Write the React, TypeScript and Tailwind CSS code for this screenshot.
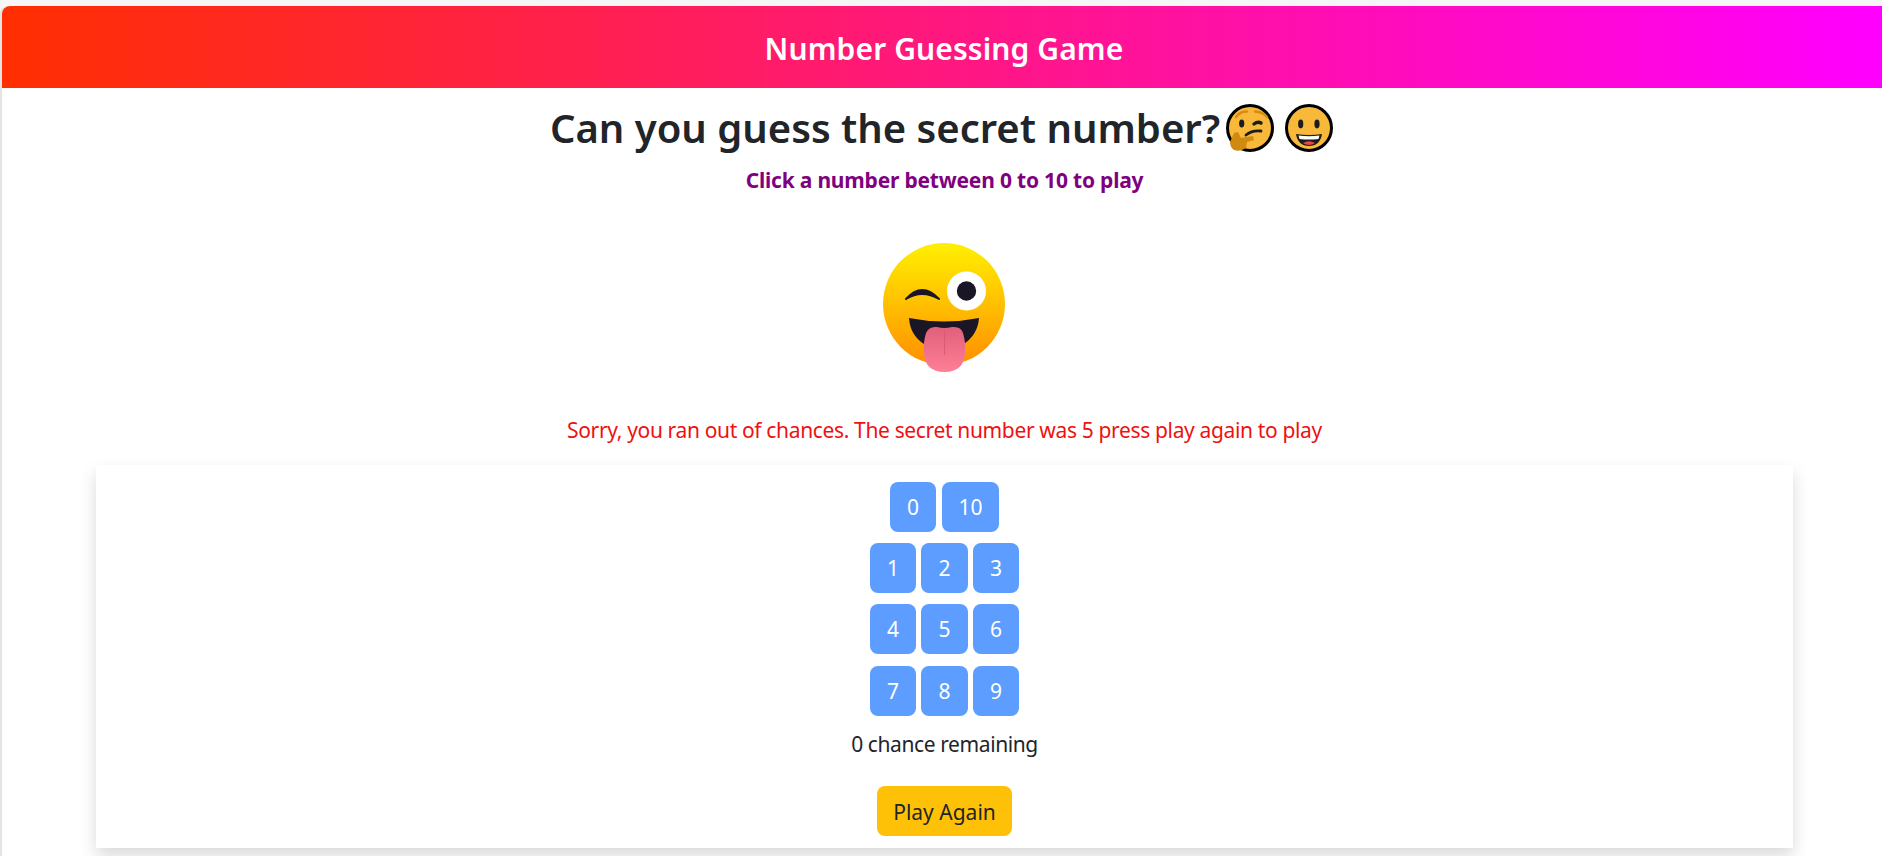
import React from "react";

const ThinkingFace = () => (
  <svg viewBox="0 0 48 48" className="w-12 h-12 shrink-0">
    <circle cx="24" cy="24" r="22.5" fill="#f8b93a" stroke="#000" strokeWidth="3" />
    <path d="M10 13 Q14 7.5 21 7.5" fill="none" stroke="#d98a12" strokeWidth="2.4" strokeLinecap="round" />
    <path d="M29 7.5 Q37 8 41 13" fill="none" stroke="#d98a12" strokeWidth="2.4" strokeLinecap="round" />
    <ellipse cx="15.7" cy="19.5" rx="2.6" ry="4" fill="#1c1c1c" />
    <path d="M28 20 Q32 17 35 19" fill="none" stroke="#1c1c1c" strokeWidth="3.4" strokeLinecap="round" />
    <path d="M20 31 Q26 26 35 27" fill="none" stroke="#1c1c1c" strokeWidth="2.8" strokeLinecap="round" />
    <path d="M8 29 L12 28 L15 34 L27 32 L28 36 L21 38 L20 44 Q14 48 8 46 Q4 43 4 38 Z" fill="#cf8a0f" />
  </svg>
);

const GrinningFace = () => (
  <svg viewBox="0 0 48 48" className="w-12 h-12 shrink-0">
    <circle cx="24" cy="24" r="22.5" fill="#f8b93a" stroke="#000" strokeWidth="3" />
    <ellipse cx="15.7" cy="20" rx="2.6" ry="4.4" fill="#1c1c1c" />
    <ellipse cx="32" cy="20" rx="2.6" ry="4.4" fill="#1c1c1c" />
    <path d="M11 30 Q24 32 37 30 Q35 42 24 42 Q13 42 11 30 Z" fill="#1c1c1c" />
    <path d="M13.5 31.5 Q24 33 34.5 31.5 L33.5 35 Q24 36 14.5 35 Z" fill="#fff" />
    <path d="M18 39 Q24 35.5 30 39 Q27 41 24 41 Q21 41 18 39 Z" fill="#e5484d" />
  </svg>
);

const WinkFace = () => (
  <svg viewBox="0 0 128 132" className="w-32 h-[132px]">
    <defs>
      <linearGradient id="face" x1="0" y1="0" x2="0" y2="1">
        <stop offset="0" stopColor="#fff000" />
        <stop offset="1" stopColor="#ff8f00" />
      </linearGradient>
      <linearGradient id="tongue" x1="0" y1="0" x2="0" y2="1">
        <stop offset="0" stopColor="#e0607c" />
        <stop offset="1" stopColor="#ff7f96" />
      </linearGradient>
    </defs>
    <circle cx="63" cy="61" r="61" fill="url(#face)" />
    <circle cx="85.5" cy="48" r="19.5" fill="#fff" />
    <circle cx="85.5" cy="48" r="9.7" fill="#1a1626" />
    <path d="M25 56 Q41 38 58 56 Q41 46 25 56 Z" fill="#1a1626" stroke="#1a1626" strokeWidth="2" strokeLinejoin="round" />
    <path d="M28 75 Q63 82 98 75 Q97 91 83 101 L43 101 Q29 92 28 75 Z" fill="#1a1626" />
    <path d="M45 90 Q48 83 56 84 Q63 86 71 84 Q80 83 82 90 Q85 100 84 110 Q83 129 63.5 129 Q44 129 43 110 Q42 100 45 90 Z" fill="url(#tongue)" />
    <path d="M63.5 87 L63.5 112" stroke="#d95a76" strokeWidth="1" />
  </svg>
);

const NumButton = ({ label, className }: { label: string; className: string }) => (
  <button className={`h-[50px] rounded-lg bg-[#5c9dff] pt-[2px] text-[21px] text-white ${className}`}>{label}</button>
);

export default function App() {
  return (
    <div className="h-[856px] overflow-hidden bg-[#f6f6f6] pt-[6px] font-['Noto_Sans',sans-serif] text-[#212529]">
      <div className="h-full border-l-2 border-[#e4e4e4] bg-white rounded-tl-lg">
        <header className="flex h-[82px] items-center justify-center rounded-tl-lg bg-[linear-gradient(to_right,#ff2f00,#ff00ff)] pt-[2px] pl-[4px] text-[30px] font-semibold tracking-[0.1px] text-white">
          Number Guessing Game
        </header>
        <div className="flex flex-col items-center pl-[5px]">
          <div className="mt-[10px] mr-[6px] flex h-[60px] items-center text-[40px] font-semibold">
            <span>Can you guess the secret number?</span>
            <span className="ml-[6px] flex gap-[11px]">
              <ThinkingFace />
              <GrinningFace />
            </span>
          </div>
          <p className="mt-[6px] text-[21px] leading-[32px] font-bold tracking-[-0.2px] text-[#800080]">
            Click a number between 0 to 10 to play
          </p>
          <div className="mt-[47px]">
            <WinkFace />
          </div>
          <p className="mt-[40px] text-[21px] leading-[30px] tracking-[-0.35px] text-[#ee1111]">
            Sorry, you ran out of chances. The secret number was 5 press play again to play
          </p>
          <div className="mt-[20px] flex h-[383px] w-[1697px] flex-col items-center bg-white pt-[17px] shadow-[0_8px_16px_rgba(0,0,0,0.15)]">
            <div className="flex gap-[6px]">
              <NumButton label="0" className="w-[46px]" />
              <NumButton label="10" className="w-[57px]" />
            </div>
            <div className="mt-[11px] flex gap-[5px]">
              <NumButton label="1" className="w-[46px]" />
              <NumButton label="2" className="w-[47px]" />
              <NumButton label="3" className="w-[46px]" />
            </div>
            <div className="mt-[11px] flex gap-[5px]">
              <NumButton label="4" className="w-[46px]" />
              <NumButton label="5" className="w-[47px]" />
              <NumButton label="6" className="w-[46px]" />
            </div>
            <div className="mt-[12px] flex gap-[5px]">
              <NumButton label="7" className="w-[46px]" />
              <NumButton label="8" className="w-[47px]" />
              <NumButton label="9" className="w-[46px]" />
            </div>
            <p className="mt-[13px] text-[21px] leading-[30px] tracking-[-0.4px]">0 chance remaining</p>
            <button className="mt-[27px] h-[50px] w-[135px] rounded-lg bg-[#ffc107] pt-[3px] text-[21px] text-[#212529]">
              Play Again
            </button>
          </div>
        </div>
      </div>
    </div>
  );
}
